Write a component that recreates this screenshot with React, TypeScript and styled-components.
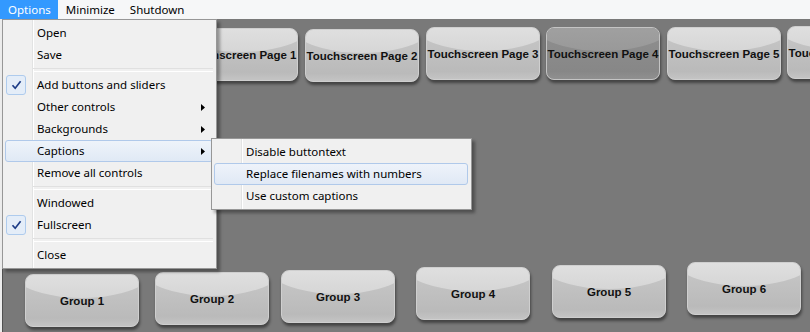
import React from "react";
import styled, { createGlobalStyle, css } from "styled-components";

const Global = createGlobalStyle`
  html, body { margin: 0; padding: 0; background: #797979; }
  body { width: 810px; height: 332px; overflow: hidden; }
  * { box-sizing: border-box; }
`;

const Window = styled.div`
  position: relative;
  width: 810px;
  height: 332px;
  display: flex;
  flex-direction: column;
  font-family: "Noto Sans", "Open Sans", sans-serif;
  font-size: 11.5px;
  overflow: hidden;
`;

const MenuBar = styled.div`
  height: 19px;
  display: flex;
  align-items: stretch;
  background: #f6f7f8;
  flex: none;
`;

const BarItem = styled.div<{ $active?: boolean }>`
  display: flex;
  align-items: center;
  padding: 0 7px 1px 8px;
  color: ${(p) => (p.$active ? "#fff" : "#000")};
  background: ${(p) => (p.$active ? "#3399ff" : "transparent")};
`;

const Canvas = styled.div`
  position: relative;
  flex: 1;
  background: #797979;
  border-left: 2px solid #ececec;
  box-shadow: inset 1px 0 0 #505050;
`;

const Btn = styled.div<{ $x: number; $y: number; $selected?: boolean }>`
  position: absolute;
  left: ${(p) => p.$x}px;
  top: ${(p) => p.$y}px;
  width: 114px;
  height: 53px;
  border-radius: 8px;
  overflow: hidden;
  display: flex;
  align-items: center;
  justify-content: center;
  padding-top: 1px;
  font-family: "Liberation Sans", Arial, sans-serif;
  font-weight: bold;
  font-size: 11.5px;
  color: #111;
  white-space: nowrap;
  border: 1px solid #cfcfcf;
  box-shadow: 1px 3px 3px rgba(0, 0, 0, 0.45);
  background: linear-gradient(#c8c8c8, #bababa 85%, #c4c4c4);
  &::before {
    content: "";
    position: absolute;
    left: -25%;
    right: -25%;
    top: -120%;
    height: 165%;
    border-radius: 50%;
    background: linear-gradient(#e3e3e3 60%, #d6d6d6);
  }
  ${(p) =>
    p.$selected &&
    css`
      border-color: #c4c4c4;
      background: linear-gradient(#8f8f8f, #878787 85%, #909090);
      &::before {
        background: linear-gradient(#a3a3a3 60%, #999999);
      }
    `}
`;

const BtnLabel = styled.span`
  position: relative;
`;

const Menu = styled.div<{ $x: number; $y: number; $w: number }>`
  position: absolute;
  left: ${(p) => p.$x}px;
  top: ${(p) => p.$y}px;
  width: ${(p) => p.$w}px;
  padding: 2px 0 2px 0;
  border: 1px solid #979797;
  background: linear-gradient(
      to right,
      transparent 29px,
      #e2e3e3 29px,
      #e2e3e3 30px,
      #ffffff 30px,
      #ffffff 31px,
      transparent 31px
    ),
    #f0f0f0;
  box-shadow: 3px 3px 3px rgba(0, 0, 0, 0.35);
  color: #000;
  z-index: 5;
`;

const Item = styled.div<{ $hot?: boolean }>`
  height: 22px;
  margin: 0 3px 0 2px;
  border: 1px solid ${(p) => (p.$hot ? "#b0c9ea" : "transparent")};
  border-radius: 3px;
  background: ${(p) =>
    p.$hot ? "linear-gradient(#eef3fa, #e0e9f5)" : "transparent"};
  display: flex;
  align-items: center;
  padding-right: 7px;
  white-space: nowrap;
`;

const CheckCell = styled.div<{ $on?: boolean }>`
  width: 20px;
  height: 20px;
  flex: none;
  margin-right: 11px;
  border-radius: 3px;
  display: flex;
  align-items: center;
  justify-content: center;
  ${(p) =>
    p.$on &&
    css`
      border: 1px solid #aecbed;
      background: #e4edf8;
    `}
`;

const Label = styled.span`
  flex: 1;
  padding-bottom: 1px;
`;

const Separator = styled.div`
  height: 8px;
  margin-left: 30px;
  margin-right: 3px;
  display: flex;
  align-items: center;
  &::after {
    content: "";
    display: block;
    width: 100%;
    height: 2px;
    border-top: 1px solid #e0e0e0;
    border-bottom: 1px solid #ffffff;
  }
`;

const Check = () => (
  <svg width="11" height="10" viewBox="0 0 11 10">
    <path d="M1.5 5.2 L4.2 8.2 L9.6 1.2" fill="none" stroke="#1d3c86" strokeWidth="1.7" />
  </svg>
);

const Arrow = () => (
  <svg width="4" height="7" viewBox="0 0 4 7">
    <polygon points="0,0 4,3.5 0,7" fill="#000" />
  </svg>
);

type Entry =
  | { kind: "sep" }
  | { kind: "item"; text: string; checked?: boolean; sub?: boolean; hot?: boolean };

const mainMenu: Entry[] = [
  { kind: "item", text: "Open" },
  { kind: "item", text: "Save" },
  { kind: "sep" },
  { kind: "item", text: "Add buttons and sliders", checked: true },
  { kind: "item", text: "Other controls", sub: true },
  { kind: "item", text: "Backgrounds", sub: true },
  { kind: "item", text: "Captions", sub: true, hot: true },
  { kind: "item", text: "Remove all controls" },
  { kind: "sep" },
  { kind: "item", text: "Windowed" },
  { kind: "item", text: "Fullscreen", checked: true },
  { kind: "sep" },
  { kind: "item", text: "Close" },
];

const subMenu: Entry[] = [
  { kind: "item", text: "Disable buttontext" },
  { kind: "item", text: "Replace filenames with numbers", hot: true },
  { kind: "item", text: "Use custom captions" },
];

const renderEntries = (entries: Entry[]) =>
  entries.map((e, i) =>
    e.kind === "sep" ? (
      <Separator key={i} />
    ) : (
      <Item key={i} $hot={e.hot}>
        <CheckCell $on={e.checked}>{e.checked && <Check />}</CheckCell>
        <Label>{e.text}</Label>
        {e.sub && <Arrow />}
      </Item>
    )
  );

const pages = [
  { t: "Touchscreen Page 1", x: 182, y: 9 },
  { t: "Touchscreen Page 2", x: 303, y: 10 },
  { t: "Touchscreen Page 3", x: 424, y: 8 },
  { t: "Touchscreen Page 4", x: 544, y: 8, sel: true },
  { t: "Touchscreen Page 5", x: 665, y: 8 },
  { t: "Touchscreen Page 6", x: 785, y: 7 },
];

const groups = [
  { t: "Group 1", x: 23, y: 255 },
  { t: "Group 2", x: 153, y: 253 },
  { t: "Group 3", x: 279, y: 251 },
  { t: "Group 4", x: 414, y: 248 },
  { t: "Group 5", x: 550, y: 246 },
  { t: "Group 6", x: 685, y: 243 },
];

export default function App() {
  return (
    <>
      <Global />
      <Window>
        <MenuBar>
          <BarItem $active>Options</BarItem>
          <BarItem>Minimize</BarItem>
          <BarItem>Shutdown</BarItem>
        </MenuBar>
        <Canvas>
          {pages.map((p) => (
            <Btn key={p.t} $x={p.x} $y={p.y} $selected={p.sel}>
              <BtnLabel>{p.t}</BtnLabel>
            </Btn>
          ))}
          {groups.map((g) => (
            <Btn key={g.t} $x={g.x} $y={g.y}>
              <BtnLabel>{g.t}</BtnLabel>
            </Btn>
          ))}
        </Canvas>
        <Menu $x={2} $y={19} $w={215}>
          {renderEntries(mainMenu)}
        </Menu>
        <Menu $x={211} $y={138} $w={261}>
          {renderEntries(subMenu)}
        </Menu>
      </Window>
    </>
  );
}
